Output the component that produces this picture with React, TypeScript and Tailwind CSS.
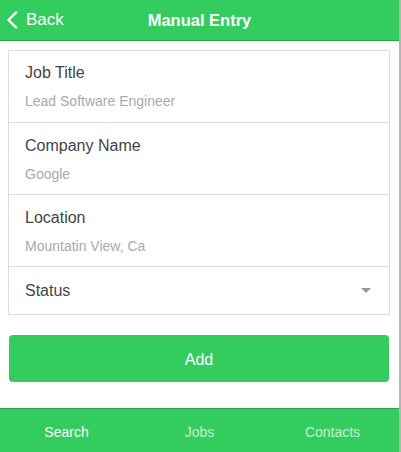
const fields = [
  { label: 'Job Title', placeholder: 'Lead Software Engineer' },
  { label: 'Company Name', placeholder: 'Google' },
  { label: 'Location', placeholder: 'Mountatin View, Ca' },
];

export default function App() {
  return (
    <div className="flex h-[452px] w-[401px] overflow-hidden bg-white" style={{ fontFamily: '"Liberation Sans", Arial, sans-serif' }}>
      <div className="flex w-[399px] flex-col">
        {/* header */}
        <div className="flex h-[41px] shrink-0 items-center border-b border-[#28a54c] bg-[#33cd5f] text-white">
          <div className="flex w-[120px] items-center pl-[6px]">
            <svg width="12" height="18" viewBox="0 0 12 18">
              <path d="M10 1.5 L2.5 9 L10 16.5" fill="none" stroke="white" strokeWidth="2.4" strokeLinecap="round" strokeLinejoin="round" />
            </svg>
            <span className="ml-[8px] text-[17px]">Back</span>
          </div>
          <div className="flex-1 text-center text-[16.5px] font-bold">Manual Entry</div>
          <div className="w-[120px]" />
        </div>

        {/* form */}
        <div className="flex-1 pt-[9px]">
          <div className="ml-[8px] w-[382px] border border-[#dddddd] bg-white">
            {fields.map((f, i) => (
              <div
                key={f.label}
                className={`flex flex-col px-[16px] ${i > 0 ? 'h-[72px] border-t border-[#dddddd] pt-[13px]' : 'h-[71px] pt-[12px]'}`}
              >
                <span className="text-[16px] leading-[20px] text-[#444444]">{f.label}</span>
                <span className="mt-[9px] text-[14px] leading-[18px] text-[#aaaaaa]">{f.placeholder}</span>
              </div>
            ))}
            <div className="flex h-[48px] items-center justify-between border-t border-[#dddddd] pl-[16px] pr-[18px]">
              <span className="text-[16px] text-[#444444]">Status</span>
              <svg width="10" height="6" viewBox="0 0 10 6">
                <path d="M0 0 L10 0 L5 5 Z" fill="#999999" />
              </svg>
            </div>
          </div>

          <button className="ml-[9px] mt-[20px] flex h-[47px] w-[380px] items-center justify-center rounded-[4px] bg-[#33cd5f] pt-[2px] text-[16px] text-white">
            Add
          </button>
        </div>

        {/* tabs */}
        <div className="flex h-[44px] shrink-0 items-center border-t border-[#28a54c] bg-[#33cd5f] pt-[4px] text-[14px] text-white">
          <div className="flex-1 text-center">Search</div>
          <div className="flex-1 text-center opacity-70">Jobs</div>
          <div className="flex-1 text-center opacity-70">Contacts</div>
        </div>
      </div>
      <div className="w-[2px] bg-[#b5b5b5]" />
    </div>
  );
}
